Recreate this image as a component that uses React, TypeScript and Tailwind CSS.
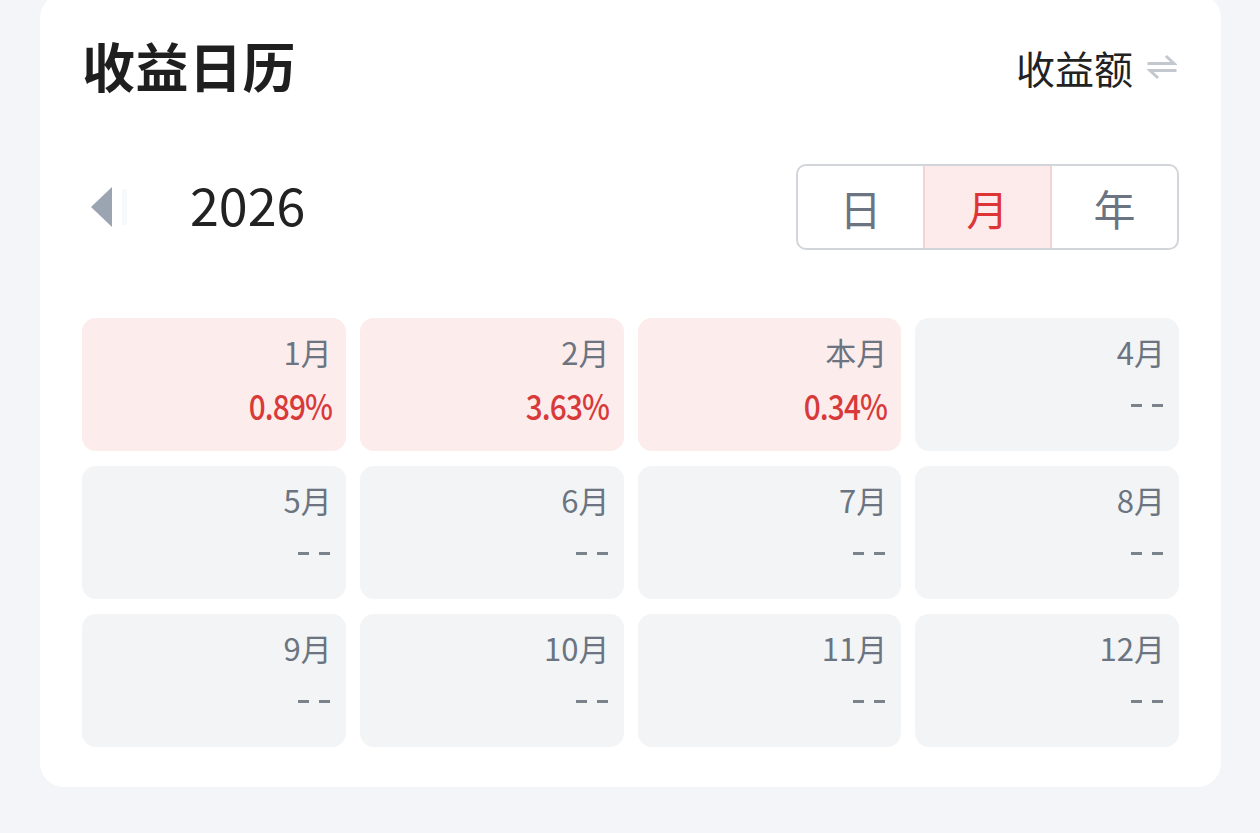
import React from "react";

const font = { fontFamily: '"Noto Sans CJK SC", "Noto Sans", sans-serif' };

type Cell = { label: string; value?: string };

const cells: Cell[] = [
  { label: "1月", value: "0.89%" },
  { label: "2月", value: "3.63%" },
  { label: "本月", value: "0.34%" },
  { label: "4月" },
  { label: "5月" },
  { label: "6月" },
  { label: "7月" },
  { label: "8月" },
  { label: "9月" },
  { label: "10月" },
  { label: "11月" },
  { label: "12月" },
];

function SwapIcon() {
  return (
    <svg width="30" height="26" viewBox="0 0 30 26" fill="none">
      <path d="M2 9.5H27L20 3" stroke="#c3c8cf" strokeWidth="3" strokeLinecap="square" strokeLinejoin="miter" />
      <path d="M28 16.5H3L10 23" stroke="#c3c8cf" strokeWidth="3" strokeLinecap="square" strokeLinejoin="miter" />
    </svg>
  );
}

export default function App() {
  return (
    <div className="w-[1260px] h-[833px] bg-[#f3f5f8] overflow-hidden" style={font}>
      <div className="ml-[40px] mt-[-6px] w-[1181px] h-[793px] bg-white rounded-[24px] px-[42px] pt-[38px]">
        {/* header */}
        <div className="flex items-center justify-between h-[66px]">
          <div className="text-[53px] font-bold text-[#1f1f1f] leading-none tracking-[0.5px]">收益日历</div>
          <div className="flex items-center gap-[14px] mr-[2px] mt-[4px]">
            <span className="text-[39px] text-[#222] leading-none">收益额</span>
            <SwapIcon />
          </div>
        </div>

        {/* year nav + segmented */}
        <div className="flex items-center justify-between mt-[66px]">
          <div className="flex items-center">
            <div className="flex items-center ml-[9px]">
              <svg width="21" height="40" viewBox="0 0 21 40">
                <polygon points="21,0 21,40 0,20" fill="#9ba5b1" />
              </svg>
              <div className="w-[5px] h-[36px] bg-[#f8f9fa] ml-[10px]" />
            </div>
            <div className="ml-[63px] mt-[-6px] text-[52px] text-[#222] leading-none">2026</div>
          </div>
          <div className="flex h-[86px] w-[383px] border-2 border-[#d2d5d9] rounded-[10px] overflow-hidden">
            <div className="flex-1 flex items-center justify-center text-[42px] text-[#6b7480]">日</div>
            <div className="flex-1 flex items-center justify-center text-[42px] text-[#dd3535] bg-[#fdeaea] border-x-2 border-[#f3d3d3]">月</div>
            <div className="flex-1 flex items-center justify-center text-[42px] text-[#6b7480]">年</div>
          </div>
        </div>

        {/* grid */}
        <div className="grid grid-cols-4 gap-x-[14px] gap-y-[15px] mt-[68px]">
          {cells.map((c) => (
            <div
              key={c.label}
              className={`h-[133px] rounded-[14px] flex flex-col items-end pr-[14px] pt-[15px] ${
                c.value ? "bg-[#fdecec]" : "bg-[#f2f4f6]"
              }`}
            >
              <div className="text-[31px] leading-[38px] text-[#6b7480]">{c.label}</div>
              {c.value ? (
                <div className="mt-[14px] text-[35px] leading-[40px] font-medium text-[#d83a3a] tracking-[-1px] scale-x-[0.85] origin-right">
                  {c.value}
                </div>
              ) : (
                <div className="mt-[14px] h-[40px] flex items-center gap-[10px] pr-[2px]">
                  <div className="w-[11px] h-[3px] bg-[#7a828c]" />
                  <div className="w-[11px] h-[3px] bg-[#7a828c]" />
                </div>
              )}
            </div>
          ))}
        </div>
      </div>
    </div>
  );
}
